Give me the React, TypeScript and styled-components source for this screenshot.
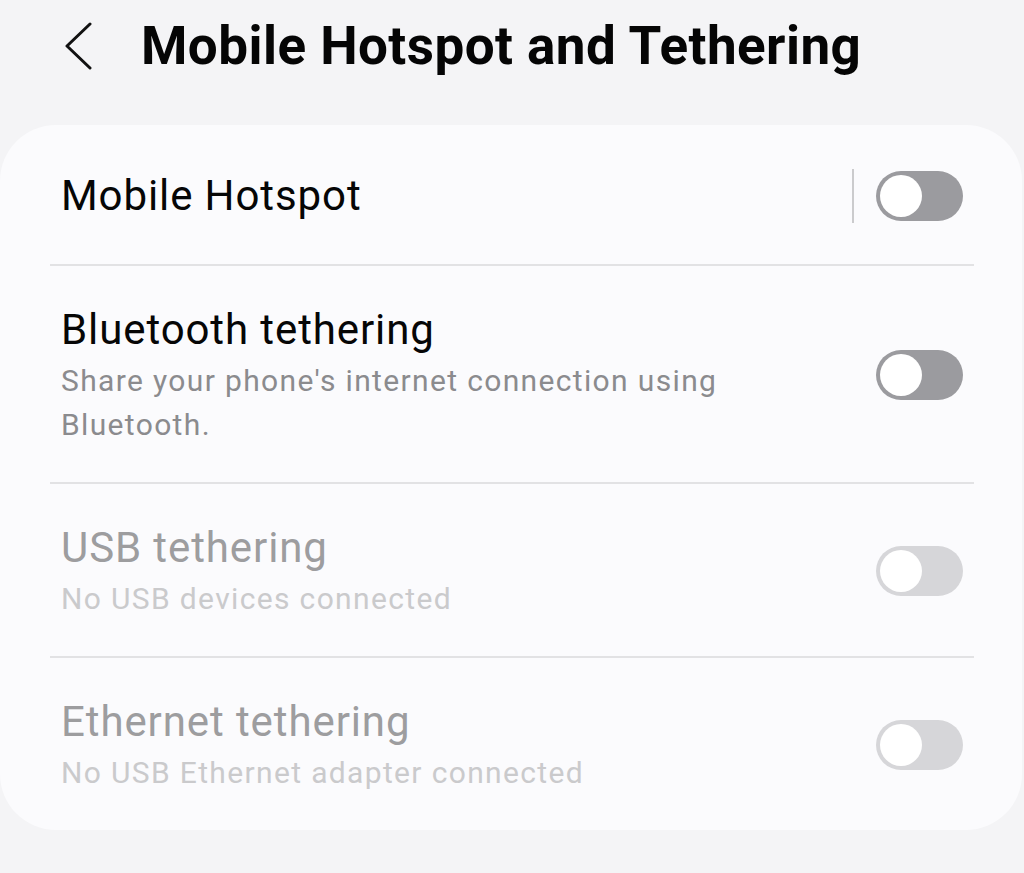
import styled, { createGlobalStyle } from "styled-components";

const GlobalStyle = createGlobalStyle`
	html, body {
		margin: 0;
		padding: 0;
		background: #f4f4f6;
		font-family: Roboto, "Noto Sans", sans-serif;
	}
`;

const Page = styled.div`
	width: 1024px;
	min-height: 873px;
	background: #f4f4f6;
`;

const Header = styled.header`
	display: flex;
	align-items: center;
	height: 92px;
	padding-left: 63px;
	gap: 48px;
`;

const BackButton = styled.button`
	display: flex;
	align-items: center;
	justify-content: center;
	width: 30px;
	height: 48px;
	padding: 0;
	border: none;
	background: none;
	cursor: pointer;
`;

const Title = styled.h1`
	margin: 0;
	font-size: 53px;
	font-weight: 700;
	color: #050505;
	letter-spacing: 0.45px;
`;

const Card = styled.section`
	margin-top: 33px;
	width: 1022px;
	box-sizing: border-box;
	padding: 0 48px 0 50px;
	background: #fbfbfd;
	border-radius: 56px;
`;

const Row = styled.div<{ $first?: boolean }>`
	display: flex;
	align-items: center;
	justify-content: space-between;
	padding: ${(p) => (p.$first ? "44px 11px 41px" : "37px 11px 35px")};
	border-top: ${(p) => (p.$first ? "none" : "2px solid #e2e2e4")};
`;

const TextBlock = styled.div`
	display: flex;
	flex-direction: column;
	max-width: 700px;
`;

const Label = styled.div<{ $disabled?: boolean }>`
	font-size: 42px;
	line-height: 54px;
	letter-spacing: 0.9px;
	color: ${(p) => (p.$disabled ? "#9d9d9f" : "#060606")};
`;

const Summary = styled.div<{ $disabled?: boolean }>`
	margin-top: 2px;
	font-size: 30px;
	line-height: 44px;
	letter-spacing: 1.35px;
	color: ${(p) => (p.$disabled ? "#cacacc" : "#8b8b8e")};
`;

const Controls = styled.div`
	display: flex;
	align-items: center;
	gap: 22px;
`;

const Divider = styled.span`
	width: 2px;
	height: 54px;
	background: #cbcbcd;
`;

const Toggle = styled.span<{ $disabled?: boolean }>`
	position: relative;
	display: block;
	width: 87px;
	height: 50px;
	border-radius: 25px;
	background: ${(p) => (p.$disabled ? "#d6d6d9" : "#9b9b9f")};

	&::after {
		content: "";
		position: absolute;
		left: 4px;
		top: 4px;
		width: 42px;
		height: 42px;
		border-radius: 50%;
		background: #ffffff;
	}
`;

type Item = {
	label: string;
	summary?: string;
	disabled?: boolean;
	divider?: boolean;
};

const items: Item[] = [
	{ label: "Mobile Hotspot", divider: true },
	{
		label: "Bluetooth tethering",
		summary: "Share your phone's internet connection using Bluetooth.",
	},
	{ label: "USB tethering", summary: "No USB devices connected", disabled: true },
	{
		label: "Ethernet tethering",
		summary: "No USB Ethernet adapter connected",
		disabled: true,
	},
];

function App() {
	return (
		<Page>
			<GlobalStyle />
			<Header>
				<BackButton aria-label="Back">
					<svg width="30" height="48" viewBox="0 0 30 48">
						<polyline
							points="27,2 4,24 27,46"
							fill="none"
							stroke="#111"
							strokeWidth="3"
							strokeLinecap="round"
							strokeLinejoin="round"
						/>
					</svg>
				</BackButton>
				<Title>Mobile Hotspot and Tethering</Title>
			</Header>
			<Card>
				{items.map((item, i) => (
					<Row key={item.label} $first={i === 0}>
						<TextBlock>
							<Label $disabled={item.disabled}>{item.label}</Label>
							{item.summary && (
								<Summary $disabled={item.disabled}>{item.summary}</Summary>
							)}
						</TextBlock>
						<Controls>
							{item.divider && <Divider />}
							<Toggle $disabled={item.disabled} />
						</Controls>
					</Row>
				))}
			</Card>
		</Page>
	);
}

export default App;
